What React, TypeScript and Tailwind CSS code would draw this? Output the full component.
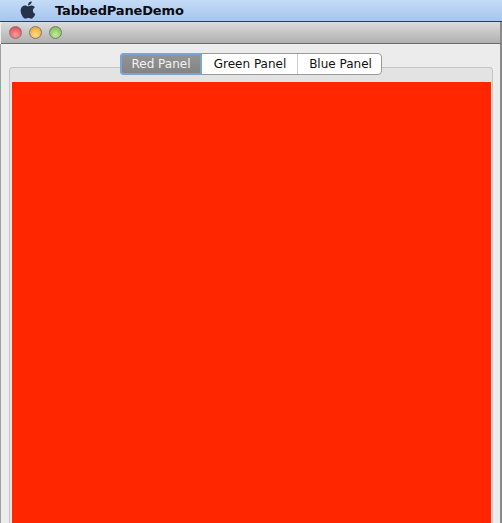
import { FaApple } from 'react-icons/fa'

const font = { fontFamily: '"DejaVu Sans", sans-serif' }

function Light({ className }: { className: string }) {
  return <span className={`block w-[13px] h-[13px] rounded-full border border-[#7a7a7a] ${className}`} />
}

export default function App() {
  return (
    <div className="w-[502px] h-[523px] overflow-hidden flex flex-col bg-[#ececec] font-['DejaVu_Sans',sans-serif]">
      {/* Menu bar */}
      <div className="h-[22px] shrink-0 flex items-center bg-gradient-to-b from-[#c4dbf6] to-[#a6c6ee] border-b border-[#2c3f63]">
        <FaApple className="ml-[19px] w-[18px] h-[20px] text-[#25344a] -mt-[2px]" />
        <span className="ml-[18px] text-[13px] leading-none font-bold text-[#0c0c14] tracking-[-0.15px]">TabbedPaneDemo</span>
      </div>

      {/* Window title bar */}
      <div className="h-[22px] shrink-0 ml-[1px] flex items-center gap-[7px] pl-[8px] bg-gradient-to-b from-[#dcdcdc] to-[#b0b0b0] border-b border-r-2 border-b-[#6b6b6b] border-r-[#8a8a8a] rounded-tl-[3px]">
        <Light className="bg-[radial-gradient(circle_at_50%_70%,#ff9c9c,#dd3b42)]" />
        <Light className="bg-[radial-gradient(circle_at_50%_70%,#ffdc8a,#e39a22)]" />
        <Light className="bg-[radial-gradient(circle_at_50%_70%,#c6ec9c,#70b244)]" />
      </div>

      {/* Tabbed pane */}
      <div className="flex-1 min-h-0 flex flex-col items-center pt-[9px] pl-[8px] pr-[7px] border-l border-r-2 border-l-[#a0a0a0] border-r-[#8a8a8a]">
        <div className="relative z-10 -mb-[8px] h-[22px] flex items-stretch text-[12px] leading-none rounded-[4px] border border-[#9a9a9a] bg-white" style={font}>
          <div className="w-[82px] -my-px -ml-px flex items-center justify-center rounded-l-[4px] rounded-r-[1px] border-2 border-[#7aa3d6] bg-gradient-to-b from-[#949494] to-[#848484] text-[#f2f2f2]">Red Panel</div>
          <div className="w-[95px] pl-px flex items-center justify-center text-[#111]">Green Panel</div>
          <div className="w-[84px] pl-[2px] flex items-center justify-center border-l border-[#cfcfcf] text-[#111]">Blue Panel</div>
        </div>
        <div className="w-full flex-1 min-h-0 flex flex-col pt-[14px] pl-[2px] pr-[1px] bg-[#e3e3e3] border border-b-0 border-[#c4c4c4] rounded-t-[4px]">
          <div className="flex-1 bg-[#ff2600]" />
        </div>
      </div>
    </div>
  )
}
